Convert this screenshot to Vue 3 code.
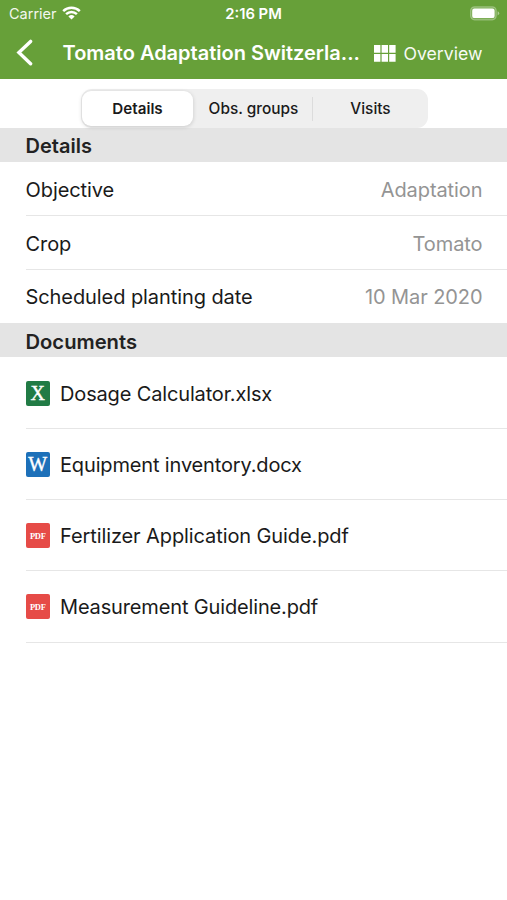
<script setup>
// ! import all
import { ref } from 'vue';

// ! define params
const params = {
	activeTab: ref('details'),
	tabs: [
		{ id: 'details', label: 'Details' },
		{ id: 'groups', label: 'Obs. groups' },
		{ id: 'visits', label: 'Visits' },
	],
	details: [
		{ id: 'objective', label: 'Objective', value: 'Adaptation' },
		{ id: 'crop', label: 'Crop', value: 'Tomato' },
		{ id: 'date', label: 'Scheduled planting date', value: '10 Mar 2020' },
	],
	documents: [
		{ id: 'dosage', type: 'xlsx', mark: 'X', name: 'Dosage Calculator.xlsx' },
		{ id: 'equipment', type: 'docx', mark: 'W', name: 'Equipment inventory.docx' },
		{ id: 'fertilizer', type: 'pdf', mark: 'PDF', name: 'Fertilizer Application Guide.pdf' },
		{ id: 'measurement', type: 'pdf', mark: 'PDF', name: 'Measurement Guideline.pdf' },
	],
}

// ! define methods
const methods = {
	selectTab: (id) => {
		params.activeTab.value = id;
	},
}
</script>

<template>
	<div class="screen">
		<header class="header">
			<div class="status">
				<div class="status-left">
					<span class="carrier">Carrier</span>
					<svg class="wifi" width="19" height="14" viewBox="0 0 19 14">
						<path d="M1.2 5.1a12 12 0 0 1 16.6 0M4.1 8.2a7.8 7.8 0 0 1 10.8 0" fill="none" stroke="#fff" stroke-width="2.5" />
						<path d="M6.4 10.4a4.5 4.5 0 0 1 6.2 0L9.5 13.6z" fill="#fff" />
					</svg>
				</div>
				<span class="time">2:16 PM</span>
				<div class="status-right">
					<svg width="31" height="16" viewBox="0 0 31 16">
						<rect x="1.6" y=".8" width="25.6" height="13" rx="4" fill="#fff" fill-opacity=".15" stroke="#fff" stroke-opacity=".3" stroke-width="1.2" />
						<rect x="3.2" y="2.5" width="22.4" height="9.6" rx="2.2" fill="#fff" />
						<path d="M28.6 5.2q1.6.7 1.6 2.1t-1.6 2.1z" fill="#fff" fill-opacity=".45" />
					</svg>
				</div>
			</div>
			<div class="nav">
				<button class="back">
					<svg width="18" height="28" viewBox="0 0 18 28">
						<path d="M15.6 2.4 3.9 13.6l11.7 11.2" fill="none" stroke="#fff" stroke-width="3.4" stroke-linecap="round" />
					</svg>
				</button>
				<h1 class="title">Tomato Adaptation Switzerla...</h1>
				<button class="overview">
					<svg width="22" height="17" viewBox="0 0 22 17">
						<path d="M0 0h6.4v7.8H0zM7.6 0H14v7.8H7.6zM15.2 0h6.4v7.8h-6.4zM0 8.9h6.4v7.8H0zM7.6 8.9H14v7.8H7.6zM15.2 8.9h6.4v7.8h-6.4z" fill="#fff" />
					</svg>
					<span class="overview-text">Overview</span>
				</button>
			</div>
		</header>

		<div class="tabs-bar">
			<div class="tabs">
				<button v-for="tab in params.tabs" :key="tab.id" class="tab"
					:class="[tab.id, { active: params.activeTab.value === tab.id }]" @click="methods.selectTab(tab.id)">
					<span>{{ tab.label }}</span>
				</button>
			</div>
		</div>

		<h2 class="section section-details">Details</h2>
		<ul class="list">
			<li v-for="item in params.details" :key="item.id" class="row" :class="item.id">
				<span class="label">{{ item.label }}</span>
				<span class="value">{{ item.value }}</span>
			</li>
		</ul>

		<h2 class="section section-documents">Documents</h2>
		<ul class="list">
			<li v-for="doc in params.documents" :key="doc.id" class="doc" :class="doc.id">
				<span class="icon" :class="doc.type">{{ doc.mark }}</span>
				<span class="name">{{ doc.name }}</span>
			</li>
		</ul>
	</div>
</template>

<style>
body {
	margin: 0;
	background: #fff;
}
</style>

<style scoped>
.screen {
	width: 507px;
	height: 900px;
	overflow: hidden;
	background: #fff;
	color: #1a1a1a;
	font-family: Inter, "Liberation Sans", sans-serif;
	font-size: 20px;
}

button {
	border: none;
	background: none;
	padding: 0;
	color: inherit;
	font: inherit;
}

.header {
	height: 79px;
	background: #67a039;
	color: #fff;
}

.status {
	display: grid;
	grid-template-columns: 1fr auto 1fr;
	align-items: center;
	height: 27px;
	padding: 0 7px 0 9px;
	font-size: 14.5px;
}

.status-left {
	display: flex;
	align-items: center;
	gap: 5px;
}

.wifi {
	margin-top: -1px;
}

.carrier {
	opacity: .92;
}

.time {
	margin-right: 2px;
	font-size: 14.8px;
	font-weight: 600;
}

.status-right {
	display: flex;
	justify-content: flex-end;
}

.nav {
	display: flex;
	align-items: center;
	height: 52px;
	padding: 0 24.5px 0 15px;
}

.back {
	display: flex;
	width: 47.5px;
}

.title {
	flex: 1;
	margin: 0;
	font-size: 20px;
	font-weight: 600;
	white-space: nowrap;
}

.overview {
	display: flex;
	align-items: center;
	gap: 7px;
	padding-top: 1px;
}

.overview-text {
	font-size: 17.7px;
	opacity: .95;
}

.tabs-bar {
	display: flex;
	box-sizing: border-box;
	height: 49px;
	padding: 10px 0 0 81px;
}

.tabs {
	display: grid;
	grid-template-columns: 111px 119px 1fr;
	box-sizing: border-box;
	width: 347px;
	height: 39px;
	padding: 2px 1px;
	border-radius: 11px;
	background: #efefef;
}

.tab {
	padding-left: 2px;
	font-size: 15.4px;
	font-weight: 500;
	white-space: nowrap;
}

.tab.active {
	padding-left: 0;
	border-radius: 9px;
	background: #fff;
	box-shadow: 0 1px 4px rgba(0, 0, 0, .16);
	font-size: 15.2px;
	font-weight: 600;
}

.tab.visits {
	background: linear-gradient(#dcdcdc, #dcdcdc) 0 50% / 1px 24px no-repeat;
}

.section {
	display: flex;
	align-items: center;
	box-sizing: border-box;
	height: 34px;
	margin: 0;
	padding: 2px 0 0 25.5px;
	background: #e4e4e4;
	color: #222;
	font-size: 20px;
	font-weight: 600;
}

.section-documents {
	font-size: 20.2px;
}

.list {
	margin: 0;
	padding: 0 0 0 25.5px;
	list-style: none;
}

.row {
	display: flex;
	align-items: center;
	justify-content: space-between;
	box-sizing: border-box;
	height: 53.8px;
	padding: 3px 24.5px 0 0;
	border-bottom: 1px solid #e6e6e6;
	letter-spacing: -.08px;
}

.row:last-child {
	padding-top: 1px;
	border-bottom: none;
}

.value {
	color: #949494;
}

.doc {
	display: flex;
	align-items: center;
	gap: 10px;
	box-sizing: border-box;
	height: 71.3px;
	padding-top: 2px;
	border-bottom: 1px solid #e6e6e6;
	letter-spacing: -.15px;
}

.doc.fertilizer {
	letter-spacing: -.1px;
}

.icon {
	display: flex;
	align-items: center;
	justify-content: center;
	width: 24.5px;
	height: 25px;
	margin-bottom: 1px;
	border-radius: 2px;
	color: #fff;
	font-family: "Liberation Serif", serif;
	letter-spacing: 0;
}

.xlsx {
	background: #217b45;
	-webkit-text-stroke: .4px #fff;
}

.docx {
	background: #1d70b9;
	-webkit-text-stroke: .4px #fff;
}

.pdf {
	background: #e64b47;
	font-size: 8.5px;
	font-weight: 700;
	letter-spacing: -.3px;
}
</style>
